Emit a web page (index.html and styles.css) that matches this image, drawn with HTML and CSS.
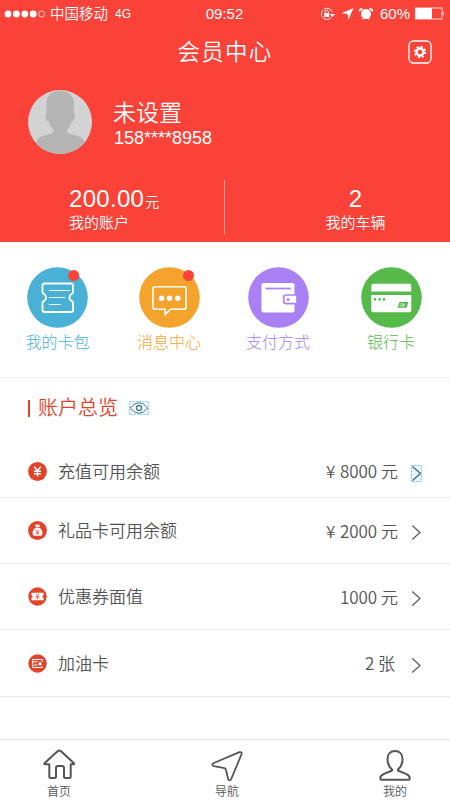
FILE: index.html
```html
<!DOCTYPE html>
<html lang="zh-CN">
<head>
<meta charset="utf-8">
<title>会员中心</title>
<link rel="stylesheet" href="styles.css">
</head>
<body>
<header class="hero">
  <div class="status">
    <div class="carrier">
      <svg width="42" height="10" viewBox="0 0 42 10" fill="#fff"><circle cx="4" cy="5" r="3.4"/><circle cx="12.400" cy="5" r="3.400"/><circle cx="20.800" cy="5" r="3.400"/><circle cx="29.200" cy="5" r="3.400"/><circle cx="37.600" cy="5" r="3" fill="none" stroke="#fff" stroke-width=".7"/></svg>
      <span class="operator">中国移动</span><span class="network">4G</span>
    </div>
    <span class="time">09:52</span>
    <div class="indicators">
      <svg width="54" height="16" viewBox="0 0 54 16" fill="#fff"><path d="M11.500 11.200A5.600 5.600 0 1 1 12.300 6" fill="none" stroke="#fff" stroke-width=".9"/><path d="M10 8h5l-2.500 3zM4.300 7h5v4h-5z"/><path d="M5.300 7V5.600a1.500 1.500 0 0 1 3 0V7" fill="none" stroke="#fff" stroke-width=".9"/><path d="M21.500 7.200 33.500 2 28.500 13.500 27.500 8z"/><circle cx="46" cy="8" r="5"/><path d="M39.500 6a2.300 2.300 0 0 1 3.500-3zM52.500 6A2.300 2.300 0 0 0 49 3zM42 13.500l1.500-2h5l1.500 2-2-.5h-4z"/></svg>
      <span class="percent">60%</span>
      <svg class="battery" width="30" height="13" viewBox="0 0 30 13"><rect x=".5" y="1" width="26.500" height="11" fill="none" stroke="#fff" stroke-width=".8"/><path d="M.5 1h16.500v11H.5zM28 4.300q2 2.200 0 4.400z" fill="#fff"/></svg>
    </div>
  </div>
  <div class="titlebar">
    <h1>会员中心</h1>
    <svg class="settings" width="24" height="24" viewBox="0 0 24 24"><rect x="1" y="1" width="22" height="22" rx="4.500" fill="none" stroke="#fff" stroke-width="1.300"/><circle cx="12" cy="12" r="3.500" fill="none" stroke="#fff" stroke-width="2.400"/><circle cx="12" cy="12" r="5.300" fill="none" stroke="#fff" stroke-width="1.800" stroke-dasharray="2.080 2.080"/></svg>
  </div>
  <div class="profile">
    <svg width="64" height="64" viewBox="0 0 64 64"><defs><clipPath id="face"><circle cx="32" cy="32" r="32"/></clipPath></defs><circle cx="32" cy="32" r="32" fill="#d3d3d3"/><path clip-path="url(#face)" fill="#b5b5b5" d="M18.500 24V14C18.500 5 23 1 32 1s14 4 14 13v10C47.500 24 47 27 46 29.500Q45 31 44 31C43 35 41 38 39 40V42C41 45 49 44 54 48Q57 51 57 54V64H8V54Q8 51 11 48C16 44 23 45 25.500 42V40C23.500 38 21.500 35 20.500 31Q19 31 18 29.500C17 27 17 24 18.500 24Z"/></svg>
    <div class="identity"><div class="name">未设置</div><div class="phone">158****8958</div></div>
  </div>
  <div class="stats">
    <div class="stat account"><div class="amount">200.00<small>元</small></div><div class="caption">我的账户</div></div>
    <div class="stat cars"><div class="amount">2</div><div class="caption">我的车辆</div></div>
  </div>
</header>
<nav class="shortcuts">
  <a class="shortcut blue">
    <svg width="61" height="61" viewBox="0 0 61 61"><circle cx="30.500" cy="30.500" r="30.300" fill="#49b1d5"/><path d="M17.500 16.500h26.500q2 0 2 2v6.500q0 1.500-1.500 2a4 4 0 0 0 0 7q1.500.5 1.500 2v7q0 2-2 2H17.500q-2 0-2-2v-7q0-1.500 1.500-2a4 4 0 0 0 0-7q-1.500-.5-1.500-2v-6.500q0-2 2-2z" fill="none" stroke="#fff" stroke-width="1.900"/><path d="M22 23.500h21M22 30.500h16M22 37.500h12" stroke="#fff" stroke-width="1.100"/><circle cx="46.700" cy="8.500" r="5.500" fill="#fa4238"/></svg>
    <span>我的卡包</span>
  </a>
  <a class="shortcut orange">
    <svg width="61" height="61" viewBox="0 0 61 61"><circle cx="30.500" cy="30.500" r="30.300" fill="#f4a42d"/><path d="M16 19.700h29q2 0 2 2v18.500q0 2-2 2H31.500L26 47.500v-5.300H16q-2 0-2-2V21.700q0-2 2-2z" fill="none" stroke="#fff" stroke-width="1.600"/><g fill="#fff"><circle cx="22.500" cy="31.300" r="2.700"/><circle cx="30.500" cy="31.300" r="2.700"/><circle cx="38.800" cy="31.300" r="2.700"/></g><circle cx="49.500" cy="8.500" r="5.500" fill="#fa4238"/></svg>
    <span>消息中心</span>
  </a>
  <a class="shortcut purple">
    <svg width="61" height="61" viewBox="0 0 61 61"><circle cx="30.500" cy="30.500" r="30.300" fill="#a981f5"/><rect x="13.500" y="16" width="33" height="29.500" rx="2" fill="#fff"/><path d="M17.500 21.500H43" stroke="#a981f5" stroke-width="1.700"/><path d="M49 28H38q-2.300 0-2.300 2.300v4q0 2.300 2.300 2.300h11z" fill="#fff" stroke="#a981f5" stroke-width="1.700"/><circle cx="40" cy="32.400" r="1.500" fill="#a981f5"/></svg>
    <span>支付方式</span>
  </a>
  <a class="shortcut green">
    <svg width="61" height="61" viewBox="0 0 61 61"><circle cx="30.500" cy="30.500" r="30.300" fill="#55ba4a"/><path d="M12.300 16.800h36q2 0 2 2v5.700h-40v-5.700q0-2 2-2zM10.300 28h40v15.200q0 2-2 2h-36q-2 0-2-2z" fill="#fff"/><g fill="#55ba4a"><ellipse cx="14" cy="32.300" rx="1.200" ry="1.500"/><ellipse cx="18.500" cy="32.300" rx="1.200" ry="1.500"/><ellipse cx="23" cy="32.300" rx="1.200" ry="1.500"/><path d="m38.500 35 9-.2-2 6h-9z"/></g><path d="m39.500 37 3-.1-1 2h-3m5-2-1 3" fill="none" stroke="#fff" stroke-width=".7"/></svg>
    <span>银行卡</span>
  </a>
</nav>
<main class="overview">
  <div class="heading">
    <h2>账户总览</h2>
    <svg width="20" height="14" viewBox="0 0 20 14"><rect x=".5" y=".5" width="19" height="13" fill="#eff9fe" stroke="#60bae8" stroke-dasharray="2 1.200" stroke-width=".8"/><path d="M1.200 7Q5.500 1.700 10 1.700T18.800 7Q14.500 12.300 10 12.300T1.200 7z" fill="none" stroke="#4b7489"/><circle cx="10" cy="7" r="2.500" fill="none" stroke="#4b7489" stroke-width="1.300"/></svg>
  </div>
  <div class="row first">
    <svg class="badge" width="19" height="19" viewBox="0 0 19 19"><circle cx="9.500" cy="9.500" r="9.400" fill="#e1442b"/><path d="m6.300 4.800 3.200 4 3.200-4M9.500 8.800v5.700M6 9.200h7M6 11.700h7" fill="none" stroke="#fff" stroke-width="1.400"/></svg>
    <span class="label">充值可用余额</span><span class="value"><i>¥</i>8000 元</span>
    <svg class="chevron" width="11" height="17" viewBox="0 0 11 17"><rect x=".5" y=".5" width="9.800" height="16" fill="#e8f7ff" stroke="#50b0e4" stroke-width=".8" stroke-dasharray="2 1.200"/><path d="m1.500 1.500 8 7-8 7" fill="none" stroke="#426574" stroke-width="1.200"/></svg>
  </div>
  <div class="row">
    <svg class="badge" width="19" height="19" viewBox="0 0 19 19"><circle cx="9.500" cy="9.500" r="9.400" fill="#e1442b"/><path d="m6.800 3.500 1.500.5 1.200-.7 1.200.7 1.500-.5-1.200 2.800q3.500 2.500 3.500 6 0 2.500-2 2.500h-6q-2 0-2-2.500 0-3.500 3.500-6z" fill="#fff"/><path d="M7.500 6.500h4m-3.700 2 1.700 2 1.700-2m-1.700 2v3m-1.800-2.500h3.600m-3.600 1.300h3.600" fill="none" stroke="#e1442b" stroke-width=".65"/></svg>
    <span class="label">礼品卡可用余额</span><span class="value"><i>¥</i>2000 元</span>
    <svg class="chevron" width="11" height="17" viewBox="0 0 11 17"><path d="m1.300 1.500 7.700 7-7.700 7" fill="none" stroke="#555" stroke-width="1.150"/></svg>
  </div>
  <div class="row">
    <svg class="badge" width="19" height="19" viewBox="0 0 19 19"><circle cx="9.500" cy="9.500" r="9.200" fill="#e1442b"/><path d="M3.500 5.700h12v2.500q-2.500 1.300 0 2.600v2.500h-12v-2.500q2.500-1.300 0-2.600z" fill="#fff"/><path d="m7.700 6.800 1.800 2.200 1.800-2.200M9.500 9v3.300M7.600 9.300h3.800m-3.800 1.500h3.800" fill="none" stroke="#e1442b" stroke-width=".7"/></svg>
    <span class="label">优惠券面值</span><span class="value">1000 元</span>
    <svg class="chevron" width="11" height="17" viewBox="0 0 11 17"><path d="m1.300 1.500 7.700 7-7.700 7" fill="none" stroke="#555" stroke-width="1.150"/></svg>
  </div>
  <div class="row last">
    <svg class="badge" width="19" height="19" viewBox="0 0 19 19"><circle cx="9.500" cy="9.500" r="9.200" fill="#e1442b"/><path d="M14.300 8V5.500H4.700v8h9.600V12M5 7.800h4.500M6 11h3.500" fill="none" stroke="#fff"/><path d="M12 7.300q-3.200 4 0 4.300 3.200-.3 0-4.300z" fill="#fff"/></svg>
    <span class="label">加油卡</span><span class="value cards">2 张</span>
    <svg class="chevron" width="11" height="17" viewBox="0 0 11 17"><path d="m1.300 1.500 7.700 7-7.700 7" fill="none" stroke="#555" stroke-width="1.150"/></svg>
  </div>
</main>
<footer class="tabs">
  <a class="tab"><svg width="34" height="34" viewBox="0 0 34 34"><path d="M17.300 2.500q1 0 1.800.8L32 15.300q.5 1-.5 1H28.700v12.200q0 1.500-1.500 1.500h-3.700q-1.500 0-1.500-1.500V20q0-2-2-2h-4q-2 0-2 2v8.500q0 1.500-1.500 1.500H8.800q-1.500 0-1.500-1.500V16.300H3q-1 0-.5-1l13-12q.8-.8 1.800-.8z"/></svg><span>首页</span></a>
  <a class="tab"><svg class="compass" width="34" height="34" viewBox="0 0 34 34"><path d="M29.500 4.200q2.800-.8 2 2.200L21 31.500q-1.600 2-2.800-.3L16 22Q15.700 20.500 14.500 20.200L4 18.200q-3.500-1.200-.2-3.200z"/></svg><span>导航</span></a>
  <a class="tab"><svg width="34" height="34" viewBox="0 0 34 34"><path d="M14 21.500C10.500 18.500 9.500 15 9.500 11c0-5 3-8 7.500-8s7.500 3 7.500 8c0 4-1 7.500-4.500 10.500q-.5 1 1 1.500l7.500 3.200q3.500 2 3.200 4.300 0 1.300-2 1.300H4.300q-2 0-2-1.300-.3-2.300 3.200-4.300L13 23q1.500-.5 1-1.500z"/></svg><span>我的</span></a>
</footer>
</body>
</html>
```
FILE: styles.css
```css
* { box-sizing: border-box; }
body {
  margin: 0;
  width: 450px;
  height: 800px;
  display: flex;
  flex-direction: column;
  overflow: hidden;
  background: #fff;
  color: #555;
  font-family: "Noto Sans CJK SC", sans-serif;
  font-weight: 350;
}
svg { display: block; flex: none; }
h1, h2 { margin: 0; font-weight: 350; }

.hero { height: 242px; flex: none; background: #fa4238; color: #fff; }
.status {
  height: 27px;
  padding: 0 5px 0 4px;
  display: grid;
  grid-template-columns: 1fr 38px 1fr;
  align-items: center;
  font-family: "Liberation Sans", "Noto Sans CJK SC", sans-serif;
  font-weight: 400;
  font-size: 15px;
  line-height: 20px;
}
.carrier, .indicators { display: flex; align-items: center; }
.operator { margin-left: 4px; font-size: 14.5px; font-weight: 350; }
.network { margin-left: 7px; font-size: 12px; }
.time { text-align: center; white-space: nowrap; }
.indicators { justify-content: flex-end; }
.percent { margin-left: 6px; }
.battery { margin-left: 5px; }

.titlebar {
  height: 50px;
  padding: 0 18px 0 42px;
  display: flex;
  align-items: center;
}
h1 { flex: 1; margin-top: -4px; text-align: center; font-size: 22.5px; line-height: 30px; letter-spacing: 1.2px; }
.profile { height: 77px; padding: 13px 0 0 28px; display: flex; gap: 21px; }
.name { margin-top: 7px; font-size: 23px; line-height: 28px; }
.phone { margin-top: 1px; padding-left: 1px; font: 18px/24px "Liberation Sans", sans-serif; }
.stats { height: 54px; margin-top: 26px; display: grid; grid-template-columns: 224px 226px; }
.cars { border-left: 1px solid #ff9d94; padding-left: 36px; text-align: center; }
.account { padding-left: 69px; }
.amount { padding-top: 5px; font: 24px/28px "Liberation Sans", sans-serif; }
.account .amount { letter-spacing: .3px; }
.amount small { margin-left: 1px; font: 350 14px/20px "Noto Sans CJK SC", sans-serif; }
.caption { margin-top: -1px; font-size: 15px; line-height: 20px; }

.shortcuts {
  height: 136px;
  flex: none;
  padding: 25px 0 0 1px;
  display: grid;
  grid-template-columns: 113px 110px 108px 118px;
  border-bottom: 1px solid #eee;
}
.shortcut {
  display: flex;
  flex-direction: column;
  align-items: center;
  font-size: 16px;
  font-weight: 300;
  line-height: 24px;
}
.shortcut span { margin-top: 1px; }
.blue { color: #49b1d5; }
.orange { color: #f4a42d; }
.purple { color: #a981f5; }
.green { color: #55ba4a; }

.overview { flex: 1; }
.heading { height: 67px; padding: 13px 28px 0; display: flex; align-items: flex-start; color: #e1442b; }
.heading h2 { font-size: 20px; line-height: 32px; display: flex; align-items: center; }
.heading h2::before { content: ""; width: 2px; height: 17px; margin: 2px 8px 0 0; background: #e1442b; }
.heading svg { margin: 10px 0 0 11px; }
.row {
  height: 66px;
  padding: 0 28px;
  display: flex;
  align-items: center;
  border-bottom: 1px solid #e9eaeb;
  font-size: 17px;
  line-height: 26px;
}
.row.first { height: 53px; }
.row.last { height: 67px; }
.label { flex: 1; margin: -1px 0 0 11px; }
.value { margin-right: 13px; }
.value i { display: inline-block; width: 14px; font-style: normal; }
.value.cards { margin-right: 16px; }
.chevron { margin-top: 4px; }

.tabs {
  height: 61px;
  flex: none;
  padding: 0 38px 0 42px;
  display: flex;
  justify-content: space-between;
  border-top: 1px solid #e2e2e2;
  font-size: 12px;
  line-height: 16px;
}
.tab { width: 34px; display: flex; flex-direction: column; align-items: center; padding-top: 8px; }
.tab svg { fill: none; stroke: #555; stroke-width: 2; stroke-linejoin: round; }
.tab .compass { stroke-width: 1.8; }
.tab span { margin-top: 1px; }
```
